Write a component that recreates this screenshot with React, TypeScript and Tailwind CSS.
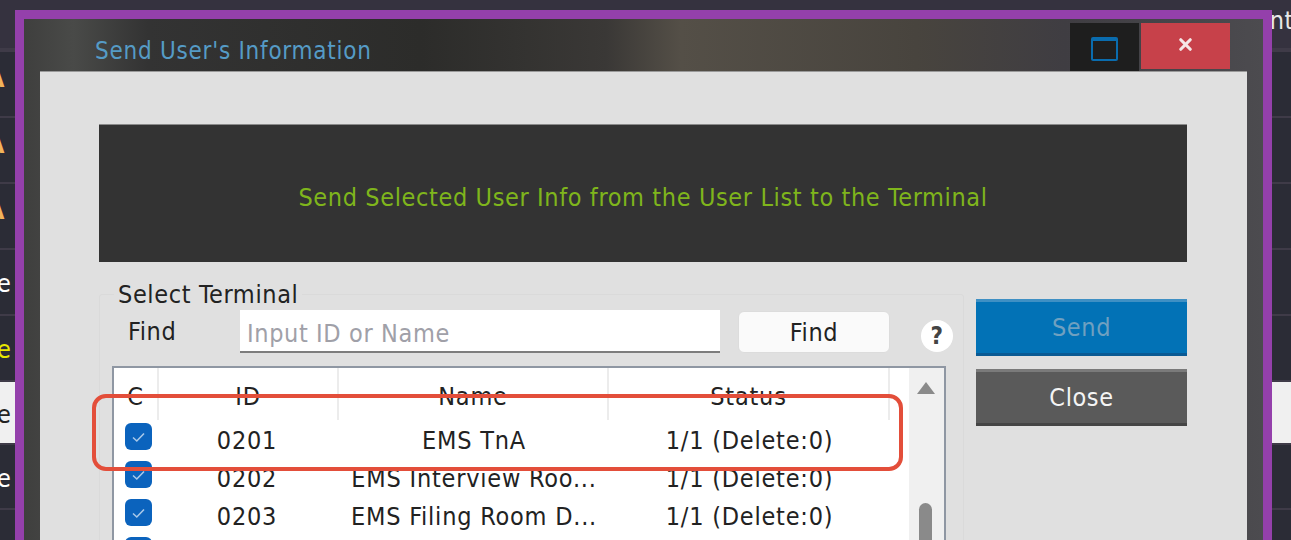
import { X } from "lucide-react";

const backgroundRows = [
  { h: "h-[52px]", bg: "bg-[#35323f]", line: "border-b-[4px]", left: "", leftColor: "", shift: "", right: "nt" },
  { h: "h-[66px]", bg: "bg-[#2b2c36]", line: "border-b-2", left: "A", leftColor: "font-bold text-[#f2b35a]", shift: "-ml-[13px] -mt-[10px]", right: "" },
  { h: "h-[66px]", bg: "bg-[#2b2c36]", line: "border-b-2", left: "A", leftColor: "font-bold text-[#f2b35a]", shift: "-ml-[13px] -mt-[10px]", right: "" },
  { h: "h-[66px]", bg: "bg-[#2b2c36]", line: "border-b-2", left: "A", leftColor: "font-bold text-[#f2b35a]", shift: "-ml-[13px] -mt-[10px]", right: "" },
  { h: "h-[66px]", bg: "bg-[#2b2c36]", line: "border-b-2", left: "e", leftColor: "text-white", shift: "-ml-[3px] mt-[4px]", right: "" },
  { h: "h-[66px]", bg: "bg-[#2b2c36]", line: "border-b-2", left: "e", leftColor: "text-[#e8e800]", shift: "-ml-[3px] mt-[4px]", right: "" },
  { h: "h-[63px]", bg: "bg-[#f0f0f0]", line: "border-b-2", left: "e", leftColor: "text-[#222]", shift: "-ml-[3px] mt-[4px]", right: "" },
  { h: "h-[65px]", bg: "bg-[#2b2c36]", line: "border-b-2", left: "e", leftColor: "text-white", shift: "-ml-[3px] mt-[4px]", right: "" },
  { h: "h-[40px]", bg: "bg-[#2b2c36]", line: "border-b-2", left: "", leftColor: "", shift: "", right: "" },
];

const terminals = [
  { id: "0201", name: "EMS TnA" },
  { id: "0202", name: "EMS Interview Roo..." },
  { id: "0203", name: "EMS Filing Room D..." },
  { id: "0204", name: "" },
];

function Check() {
  return (
    <span className="-mt-[5px] flex h-[27px] w-[27px] items-center justify-center rounded-[6px] bg-[#0b63bd]">
      <svg width="15" height="12" viewBox="0 0 15 12" fill="none" stroke="#a9c8e8" strokeWidth="1.6">
        <path d="M2 6.5 L5.8 10 L13 2.5" />
      </svg>
    </span>
  );
}

function HeadCell({ w, label, last }: { w: string; label: string; last?: boolean }) {
  return (
    <div className={`flex h-[52px] items-end justify-center pb-[8px] ${w} ${last ? "" : "border-r-2 border-[#ececec]"}`}>
      {label}
    </div>
  );
}

export default function App() {
  return (
    <div className="relative h-[540px] w-[1291px] overflow-hidden font-['DejaVu_Sans_Condensed','DejaVu_Sans',sans-serif] tracking-[0.62px]">
      {/* list behind the dialog */}
      <div className="flex flex-col">
        {backgroundRows.map((row, i) => (
          <div
            key={i}
            className={`flex items-center justify-between border-[#3f3b48] text-[25px] ${row.line} ${row.h} ${row.bg}`}
          >
            <span className={`${row.shift} ${row.leftColor}`}>{row.left}</span>
            <span className="-mr-[3px] -mt-[6px] text-[#e8e8e8]">{row.right}</span>
          </div>
        ))}
      </div>

      {/* dialog window */}
      <div className="absolute left-[15px] top-[10px] h-[600px] w-[1257px] border-[9px] border-[#9440ab] bg-[linear-gradient(90deg,#3f3f3e_0%,#494a48_4%,#333333_10%,#2c2c2a_32%,#3a3836_47%,#544f47_53%,#48443e_72%,#3f3d42_84%,#4c4b4f_100%)]">
        <div className="flex h-[52px] items-start justify-between pl-[71px]">
          <span className="mt-[18px] text-[24px] leading-[28px] tracking-[0.75px] text-[#559bc6]">Send User's Information</span>
          <div className="mr-[33px] mt-[4px] flex gap-[2px]">
            <div className="flex h-[48px] w-[69px] items-center justify-center bg-[#1e1e1e]">
              <div className="mt-[3px] h-[24px] w-[27px] rounded-[2px] border-2 border-t-[4px] border-[#0a6cae]" />
            </div>
            <div className="flex h-[46px] w-[89px] items-center justify-center bg-[#c7414a] pb-[4px]">
              <X className="h-[19px] w-[19px] text-[#f5e6e6]" strokeWidth={4} />
            </div>
          </div>
        </div>

        <div className="mx-[16px] h-[530px] border-t border-[#9a9a9a] bg-[#e0e0e0] pl-[59px] pt-[52px]">
          <div className="flex h-[138px] w-[1088px] items-center justify-center border-t border-[#8a8a8a] bg-[#333333] pt-[8px] text-[25px] text-[#7fb51c]">
            Send Selected User Info from the User List to the Terminal
          </div>

          <div className="mt-[32px] flex items-start gap-[12px]">
            {/* select terminal group */}
            <div className="relative h-[300px] w-[865px] rounded-[3px] border border-[#dadada] pl-[12px] pt-[15px]">
              <span className="absolute left-[14px] top-[-15px] bg-[#e0e0e0] px-[4px] text-[25px] leading-[30px] text-[#222]">
                Select Terminal
              </span>
              <div className="flex items-center">
                <span className="ml-[16px] w-[112px] text-[25px] leading-[30px] text-[#222]">Find</span>
                <div className="flex h-[43px] w-[480px] items-center border-b-2 border-[#7d7d7d] bg-white pl-[7px] pt-[7px] text-[25px] text-[#a0a0a8]">
                  Input ID or Name
                </div>
                <button className="ml-[18px] h-[42px] w-[152px] rounded-[6px] border border-[#dcdcdc] bg-[#fafafa] pt-[2px] text-[25px] text-[#222]">
                  Find
                </button>
                <span className="ml-[31px] mt-[8px] flex h-[32px] w-[32px] items-center justify-center rounded-full bg-white text-[24px] font-bold text-[#444]">
                  ?
                </span>
              </div>

              <div className="mt-[13px] flex h-[300px] w-[834px] border-2 border-b-0 border-[#8f97a3] bg-white">
                <div className="flex-1 text-[25px] leading-[30px] tracking-[0.78px] text-[#222]">
                  <div className="flex">
                    <HeadCell w="w-[45px]" label="C" />
                    <HeadCell w="w-[180px]" label="ID" />
                    <HeadCell w="w-[270px]" label="Name" />
                    <HeadCell w="w-[281px]" label="Status" />
                  </div>
                  {terminals.map((t) => (
                    <div key={t.id} className="flex h-[38px] items-center">
                      <div className="flex w-[45px] justify-center pl-[4px]">
                        <Check />
                      </div>
                      <div className="w-[180px] pr-[4px] pt-[4px] text-center">{t.id}</div>
                      <div className="w-[270px] whitespace-nowrap pt-[4px] text-center">{t.name}</div>
                      <div className="w-[281px] pt-[4px] text-center">{t.name ? "1/1 (Delete:0)" : ""}</div>
                    </div>
                  ))}
                </div>
                <div className="flex w-[35px] flex-col items-center bg-[#f0f0f0] pr-[2px] pt-[14px]">
                  <div className="h-0 w-0 border-x-[9px] border-b-[12px] border-x-transparent border-b-[#8a8a8a]" />
                  <div className="mt-[109px] h-[80px] w-[13px] rounded-full bg-[#8a8a8a]" />
                </div>
              </div>
            </div>

            {/* action buttons */}
            <div className="flex w-[211px] flex-col gap-[13px] pt-[5px]">
              <button className="h-[57px] border-y-[3px] border-t-[#3f90c4] border-b-[#0a5a94] bg-[#0272b6] pt-[1px] text-[25px] text-[#6fa0c0]">
                Send
              </button>
              <button className="h-[57px] border-y-[3px] border-t-[#7a7a7a] border-b-[#454545] bg-[#5a5a5a] pt-[1px] text-[25px] text-[#f4f4f4]">
                Close
              </button>
            </div>
          </div>
        </div>
      </div>

      {/* annotation box */}
      <div className="absolute left-[92px] top-[394px] h-[77px] w-[811px] rounded-[14px] border-[4px] border-[#e34e3a]" />
    </div>
  );
}
